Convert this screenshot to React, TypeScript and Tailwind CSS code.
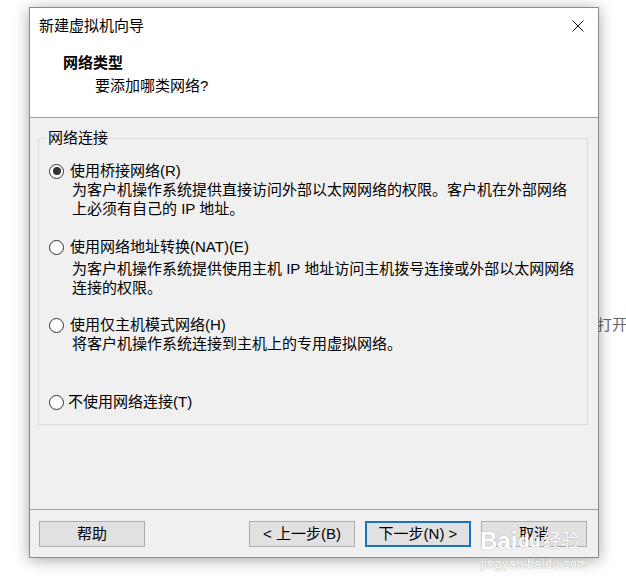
import React from "react";

const FONT = '"Liberation Sans", "Noto Sans CJK SC", sans-serif';

function Radio({ checked }: { checked?: boolean }) {
  return (
    <div className="w-[15px] h-[15px] rounded-full border border-[#333333] bg-white flex items-center justify-center shrink-0">
      {checked && <div className="w-[8px] h-[8px] rounded-full bg-[#333333]" />}
    </div>
  );
}

function Btn({ children, primary }: { children: React.ReactNode; primary?: boolean }) {
  return (
    <div
      className={
        "w-[106px] h-[26px] flex items-center justify-center text-[15px] text-black bg-[#e1e1e1] box-border " +
        (primary ? "border-2 border-[#1a73c0]" : "border border-[#adadad]")
      }
    >
      {children}
    </div>
  );
}

export default function App() {
  return (
    <div className="relative w-[626px] h-[587px] bg-white overflow-hidden" style={{ fontFamily: FONT }}>
      <div className="absolute left-[597px] top-[315px] text-[15px] leading-[20px] text-[#666666] whitespace-nowrap">打开</div>

      <div className="absolute left-[29px] top-[7px] w-[570px] h-[551px] box-border border border-[#8a8a8a] bg-white flex flex-col shadow-[0_2px_14px_rgba(0,0,0,0.35)]">
        {/* title bar */}
        <div className="h-[36px] flex items-center justify-between pl-[9px] pr-[14px] shrink-0">
          <span className="text-[15px] leading-[20px] text-black">新建虚拟机向导</span>
          <svg width="12" height="12" viewBox="0 0 12 12" className="block">
            <path d="M0.5 0.5 L11.5 11.5 M11.5 0.5 L0.5 11.5" stroke="#111" strokeWidth="1" fill="none" />
          </svg>
        </div>
        {/* header */}
        <div className="h-[74px] box-border border-b border-[#a0a0a0] shrink-0 pl-[33px] pt-[9px]">
          <div className="text-[15px] leading-[20px] font-bold text-black">网络类型</div>
          <div className="text-[15px] leading-[20px] text-black mt-[3px] ml-[32px]">要添加哪类网络?</div>
        </div>
        {/* body */}
        <div className="flex-1 bg-[#f0f0f0] flex flex-col">
          <div className="relative mt-[20px] ml-[8px] mr-[10px] h-[287px] box-border border border-[#dcdcdc] pt-[22px] pl-[10px] text-[15px] text-black">
            <div className="absolute left-[8px] top-[-11px] px-[1px] leading-[20px] bg-[#f0f0f0]">网络连接</div>

            <div className="flex items-center h-[20px] gap-[6px]">
              <Radio checked />
              <span className="leading-[20px]">使用桥接网络(R)</span>
            </div>
            <div className="ml-[23px] mt-[-1px] leading-[19px]">
              <div>为客户机操作系统提供直接访问外部以太网网络的权限。客户机在外部网络</div>
              <div>上必须有自己的 IP 地址。</div>
            </div>

            <div className="flex items-center h-[20px] gap-[6px] mt-[19px]">
              <Radio />
              <span className="leading-[20px]">使用网络地址转换(NAT)(E)</span>
            </div>
            <div className="ml-[23px] mt-[2px] leading-[19px]">
              <div>为客户机操作系统提供使用主机 IP 地址访问主机拨号连接或外部以太网网络</div>
              <div>连接的权限。</div>
            </div>

            <div className="flex items-center h-[20px] gap-[6px] mt-[18px]">
              <Radio />
              <span className="leading-[20px]">使用仅主机模式网络(H)</span>
            </div>
            <div className="ml-[23px] mt-[-1px] leading-[19px]">
              <div>将客户机操作系统连接到主机上的专用虚拟网络。</div>
            </div>

            <div className="flex items-center h-[20px] gap-[4px] mt-[39px]">
              <Radio />
              <span className="leading-[20px]">不使用网络连接(T)</span>
            </div>
          </div>
          <div className="flex-1" />
          <div className="h-[48px] box-border border-t border-[#a0a0a0] pt-[11px] pl-[9px] pr-[11px] flex items-start">
            <Btn>帮助</Btn>
            <div className="flex-1" />
            <div className="flex gap-[10px]">
              <Btn>&lt; 上一步(B)</Btn>
              <Btn primary>下一步(N) &gt;</Btn>
              <Btn>取消</Btn>
            </div>
          </div>
        </div>
      </div>

      {/* watermark */}
      <div className="absolute left-[480px] top-[528px] flex items-center text-white [text-shadow:0_0_1px_#b0b0b0,0_0_1px_#b0b0b0] pointer-events-none whitespace-nowrap">
        <span className="text-[24px] leading-[26px] font-bold" style={{ fontFamily: '"Liberation Sans", sans-serif' }}>Bai</span>
        <span className="text-[18px] leading-[26px] font-bold ml-[1px]">du</span>
        <span className="text-[18px] leading-[26px] ml-[3px]">经验</span>
      </div>
      <div className="absolute left-[481px] top-[556px] text-[12px] leading-[16px] text-white tracking-[0.6px] [text-shadow:0_0_1px_#b0b0b0,0_0_1px_#b0b0b0] pointer-events-none whitespace-nowrap">
        jingyan.baidu.com
      </div>
    </div>
  );
}
